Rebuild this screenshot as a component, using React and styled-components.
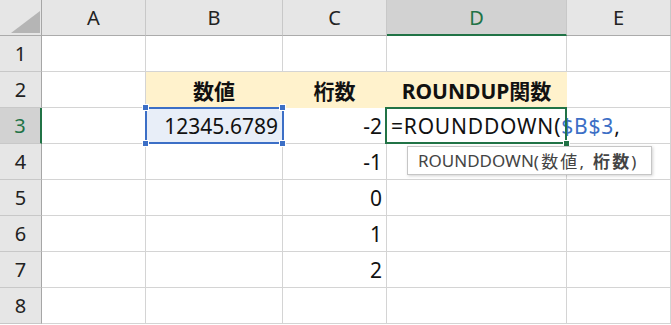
import React from "react";
import styled, { createGlobalStyle } from "styled-components";

const GlobalStyle = createGlobalStyle`
  html, body {
    margin: 0;
    padding: 0;
    background: #fff;
  }
  body {
    font-family: "Noto Sans", "Noto Sans CJK JP", sans-serif;
  }
`;

const GREEN = "#217346";
const BLUE = "#3c6fc6";
const GRID = "#d4d4d4";

const Sheet = styled.div`
  display: grid;
  grid-template-columns: 42px 104px 137px 104px 180px 104px;
  grid-auto-rows: 36px;
  width: 671px;
`;

const HeaderCell = styled.div`
  box-sizing: border-box;
  display: flex;
  align-items: center;
  justify-content: center;
  background: ${(p) => (p.$active ? "#d2d2d2" : "#e6e6e6")};
  color: ${(p) => (p.$active ? GREEN : "#222")};
  font-size: 20px;
  border-right: 1px solid #c8c8c8;
  border-bottom: 1px solid #ababab;
  ${(p) => p.$active && p.$col && `border-bottom: 2px solid ${GREEN};`}
  ${(p) => p.$row && `border-right: 1px solid #a6a6a6; border-bottom-color: #c8c8c8;`}
  ${(p) => p.$active && p.$row && `border-right: 2px solid ${GREEN};`}
`;

const Corner = styled(HeaderCell)`
  position: relative;
  border-right: 1px solid #a6a6a6;
  &::after {
    content: "";
    position: absolute;
    left: 11px;
    top: 11px;
    width: 29px;
    height: 22px;
    background: #b5b5b5;
    clip-path: polygon(100% 0, 100% 100%, 0 100%);
  }
`;

const Cell = styled.div`
  box-sizing: border-box;
  position: relative;
  display: flex;
  align-items: center;
  justify-content: ${(p) =>
    p.$align === "center" ? "center" : p.$align === "left" ? "flex-start" : "flex-end"};
  padding: 0 4px;
  font-size: 21px;
  font-weight: ${(p) => (p.$bold ? 700 : 400)};
  color: #111;
  white-space: nowrap;
  background: ${(p) => p.$fill || "transparent"};
  border-right: 1px solid ${(p) => p.$fill || GRID};
  border-bottom: 1px solid ${(p) => p.$fill || GRID};
  z-index: ${(p) => p.$layer || "auto"};
`;

const RangeBox = styled.div`
  position: absolute;
  left: -1px;
  top: -1px;
  right: -2px;
  bottom: -1px;
  border: 2px solid ${BLUE};
  pointer-events: none;
`;

const Handle = styled.span`
  position: absolute;
  width: 5px;
  height: 5px;
  background: ${(p) => p.$color};
  border: 1px solid #fff;
  ${(p) => (p.$top ? "top: -4px;" : "bottom: -4px;")}
  ${(p) => (p.$left ? "left: -4px;" : "right: -4px;")}
`;

const ActiveBox = styled.div`
  position: absolute;
  left: -2px;
  top: -1px;
  right: -1px;
  bottom: -1px;
  border: 2px solid ${GREEN};
  pointer-events: none;
`;

const Formula = styled.span`
  color: #111;
  letter-spacing: 0.8px;
`;

const Ref = styled.span`
  color: ${BLUE};
  letter-spacing: 0.8px;
`;

const Caret = styled.span`
  display: inline-block;
  width: 1px;
  height: 28px;
  margin-left: 1px;
  background: #000;
  vertical-align: middle;
`;

const Tooltip = styled.div`
  position: absolute;
  left: 20px;
  top: 38px;
  box-sizing: border-box;
  width: 245px;
  height: 29px;
  padding: 0 10px;
  display: flex;
  align-items: center;
  background: #fff;
  border: 1px solid #c6c6c6;
  box-shadow: 1px 1px 3px rgba(0, 0, 0, 0.18);
  color: #444;
  font-size: 17px;
  b {
    font-weight: 700;
  }
`;

const Args = styled.span`
  letter-spacing: 2.2px;
`;

const COLS = ["A", "B", "C", "D", "E"];
const YELLOW = "#fff2cc";

const values = {
  2: {
    B: { text: "数値", bold: true, align: "center", fill: YELLOW },
    C: { text: "桁数", bold: true, align: "center", fill: YELLOW },
    D: { text: "ROUNDUP関数", bold: true, align: "center", fill: YELLOW },
  },
  3: { B: { text: "12345.6789", fill: "#e8eef8", range: true }, C: { text: "-2" } },
  4: { C: { text: "-1" } },
  5: { C: { text: "0" } },
  6: { C: { text: "1" } },
  7: { C: { text: "2" } },
};

const FormulaCell = () => (
  <Cell $align="left" $layer={3}>
    <Formula>=ROUNDDOWN(</Formula>
    <Ref>$B$3</Ref>
    <Formula>,</Formula>
    <Caret />
    <ActiveBox />
    <Handle $color={GREEN} />
    <Tooltip>
      ROUNDDOWN
      <Args>
        (数値, <b>桁数</b>)
      </Args>
    </Tooltip>
  </Cell>
);

const App = () => {
  const rows = [1, 2, 3, 4, 5, 6, 7, 8];
  return (
    <>
      <GlobalStyle />
      <Sheet>
        <Corner />
        {COLS.map((c) => (
          <HeaderCell key={c} $col $active={c === "D"}>
            {c}
          </HeaderCell>
        ))}
        {rows.map((r) => (
          <React.Fragment key={r}>
            <HeaderCell $row $active={r === 3}>
              {r}
            </HeaderCell>
            {COLS.map((c) => {
              if (r === 3 && c === "D") return <FormulaCell key={c} />;
              const v = (values[r] || {})[c];
              if (!v) return <Cell key={c} />;
              return (
                <Cell
                  key={c}
                  $align={v.align}
                  $bold={v.bold}
                  $fill={v.fill}
                  $layer={v.range ? 2 : undefined}
                >
                  {v.text}
                  {v.range && (
                    <>
                      <RangeBox />
                      <Handle $color={BLUE} $top $left />
                      <Handle $color={BLUE} $top />
                      <Handle $color={BLUE} $left />
                      <Handle $color={BLUE} />
                    </>
                  )}
                </Cell>
              );
            })}
          </React.Fragment>
        ))}
      </Sheet>
    </>
  );
};

export default App;
